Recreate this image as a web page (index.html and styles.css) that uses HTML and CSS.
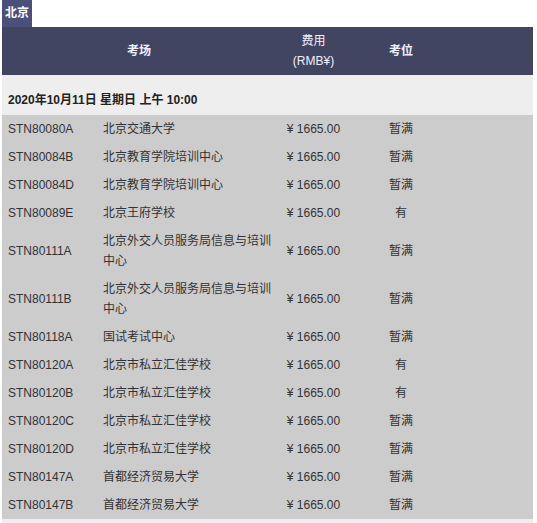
FILE: index.html
```html
<!DOCTYPE html>
<html lang="zh-CN">
<head>
<meta charset="utf-8">
<title>北京</title>
<link rel="stylesheet" href="styles.css">
</head>
<body>
<div class="wrap">
  <div class="tab">北京</div>
  <table class="exam">
    <colgroup>
      <col class="c-code"><col class="c-name"><col class="c-fee"><col class="c-seat"><col class="c-rest">
    </colgroup>
    <thead>
      <tr class="head">
        <th colspan="2" class="strong">考场</th>
        <th class="fee-h">费用<br>(RMB¥)</th>
        <th class="strong">考位</th>
        <th></th>
      </tr>
    </thead>
    <tbody>
      <tr class="date"><td colspan="5">2020年10月11日 星期日 上午 10:00</td></tr>
      <tr><td class="code">STN80080A</td><td>北京交通大学</td><td class="fee">¥ 1665.00</td><td class="seat">暂满</td><td></td></tr>
      <tr><td class="code">STN80084B</td><td>北京教育学院培训中心</td><td class="fee">¥ 1665.00</td><td class="seat">暂满</td><td></td></tr>
      <tr><td class="code">STN80084D</td><td>北京教育学院培训中心</td><td class="fee">¥ 1665.00</td><td class="seat">暂满</td><td></td></tr>
      <tr><td class="code">STN80089E</td><td>北京王府学校</td><td class="fee">¥ 1665.00</td><td class="seat">有</td><td></td></tr>
      <tr><td class="code">STN80111A</td><td>北京外交人员服务局信息与培训中心</td><td class="fee">¥ 1665.00</td><td class="seat">暂满</td><td></td></tr>
      <tr><td class="code">STN80111B</td><td>北京外交人员服务局信息与培训中心</td><td class="fee">¥ 1665.00</td><td class="seat">暂满</td><td></td></tr>
      <tr><td class="code">STN80118A</td><td>国试考试中心</td><td class="fee">¥ 1665.00</td><td class="seat">暂满</td><td></td></tr>
      <tr><td class="code">STN80120A</td><td>北京市私立汇佳学校</td><td class="fee">¥ 1665.00</td><td class="seat">有</td><td></td></tr>
      <tr><td class="code">STN80120B</td><td>北京市私立汇佳学校</td><td class="fee">¥ 1665.00</td><td class="seat">有</td><td></td></tr>
      <tr><td class="code">STN80120C</td><td>北京市私立汇佳学校</td><td class="fee">¥ 1665.00</td><td class="seat">暂满</td><td></td></tr>
      <tr><td class="code">STN80120D</td><td>北京市私立汇佳学校</td><td class="fee">¥ 1665.00</td><td class="seat">暂满</td><td></td></tr>
      <tr><td class="code">STN80147A</td><td>首都经济贸易大学</td><td class="fee">¥ 1665.00</td><td class="seat">暂满</td><td></td></tr>
      <tr><td class="code">STN80147B</td><td>首都经济贸易大学</td><td class="fee">¥ 1665.00</td><td class="seat">暂满</td><td></td></tr>
      <tr class="date"><td colspan="5">&nbsp;</td></tr>
    </tbody>
  </table>
</div>
</body>
</html>
```

FILE: styles.css
```css
html, body {
  margin: 0;
  padding: 0;
  background: #ffffff;
}

body {
  font-family: "Liberation Sans", Arial, "Noto Sans CJK SC", sans-serif;
  font-size: 12px;
  color: #333333;
}

.wrap {
  margin-left: 2px;
  width: 531px;
}

.tab {
  display: inline-block;
  background: #4b4f7c;
  color: #ffffff;
  font-weight: bold;
  font-size: 12px;
  line-height: 19px;
  padding: 4px 3px;
  vertical-align: top;
}

.exam {
  width: 531px;
  border-collapse: collapse;
  table-layout: fixed;
}

.c-code { width: 97px; }
.c-name { width: 177px; }
.c-fee { width: 75px; }
.c-seat { width: 100px; }
.c-rest { width: 82px; }

.exam th,
.exam td {
  padding: 4px 4px;
  line-height: 20px;
  vertical-align: middle;
  text-align: left;
}

.head th {
  background: #424562;
  color: #eef0ff;
  font-weight: normal;
  text-align: center;
  height: 40px;
}

.head th.strong {
  font-weight: bold;
}

.exam .date td {
  background: #eeeeee;
  font-weight: bold;
  color: #222222;
  padding: 15px 4px 5px 6px;
}

tbody tr td {
  background: #cccccc;
}

td.code {
  padding-left: 6px;
}

td.fee,
td.seat {
  text-align: center;
}
```
